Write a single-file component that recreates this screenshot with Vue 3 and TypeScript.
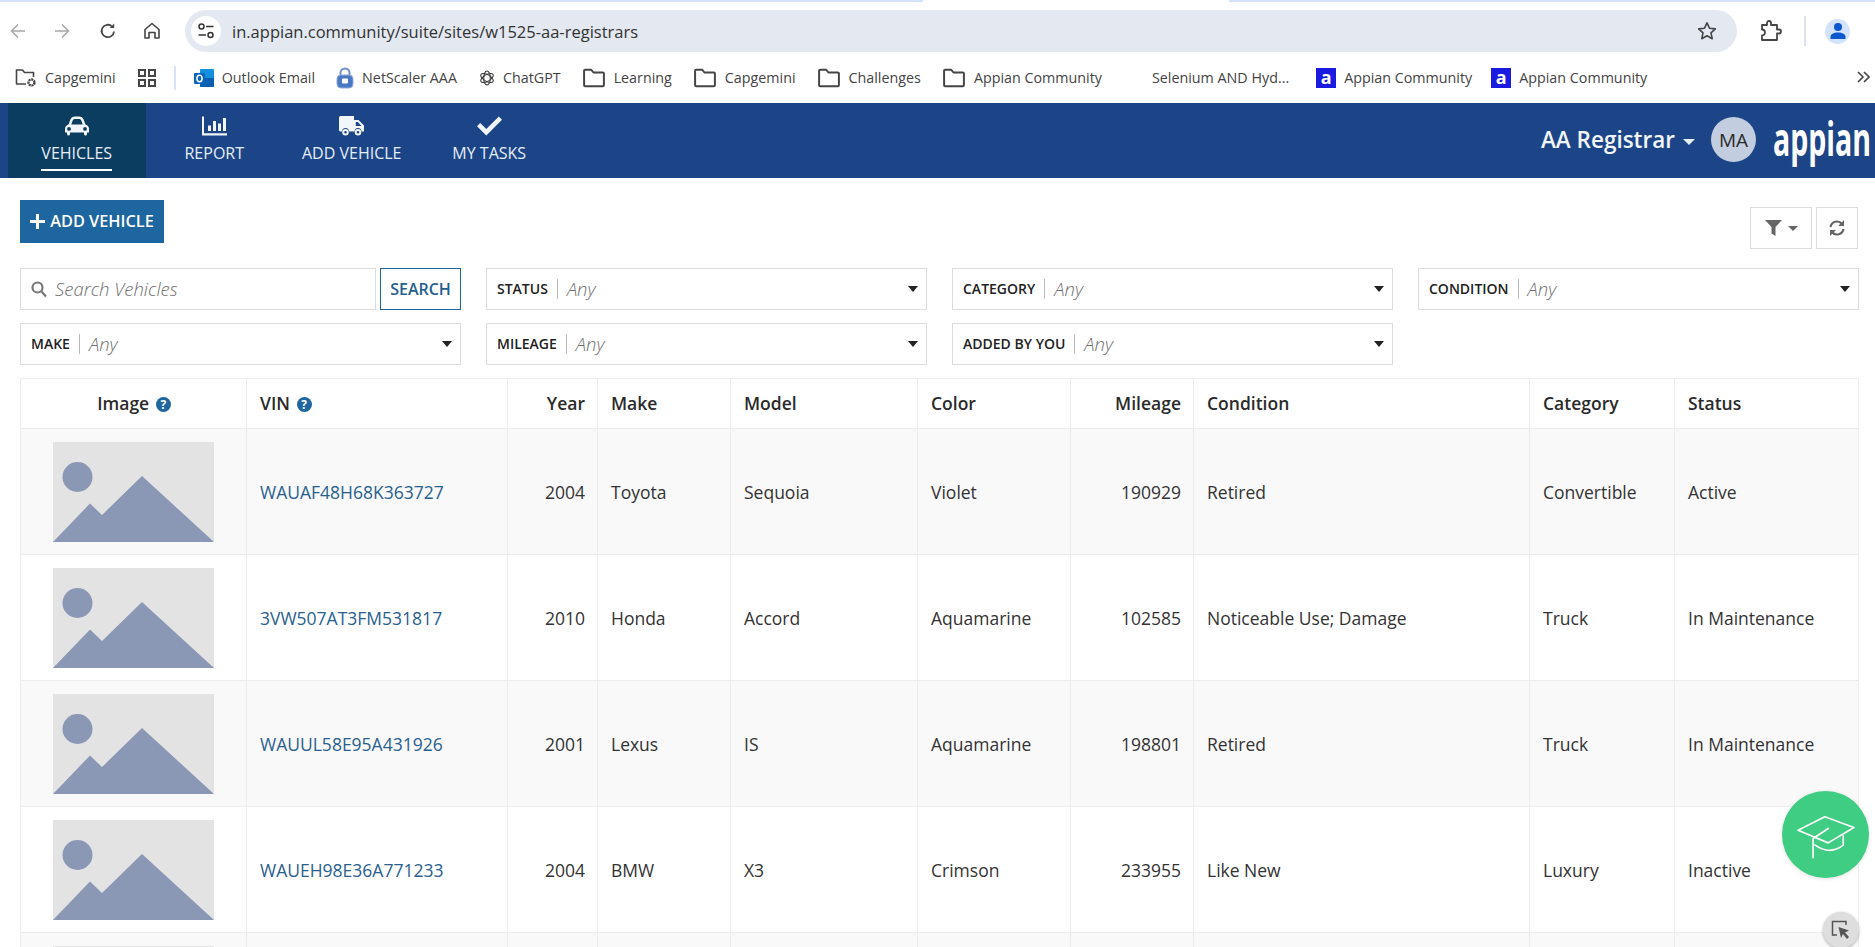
<script setup lang="ts">
interface Bookmark {
  label: string
  icon: 'capfolder' | 'outlook' | 'lock' | 'gpt' | 'folder' | 'blank' | 'appian'
}

interface Vehicle {
  vin: string
  year: number
  make: string
  model: string
  color: string
  mileage: number
  condition: string
  category: string
  status: string
}

const navItems = [
  { label: 'VEHICLES', icon: 'car', active: true },
  { label: 'REPORT', icon: 'chart', active: false },
  { label: 'ADD VEHICLE', icon: 'truck', active: false },
  { label: 'MY TASKS', icon: 'check', active: false },
]

const leftBookmarks: Bookmark[] = [{ label: 'Capgemini', icon: 'capfolder' }]

const bookmarks: Bookmark[] = [
  { label: 'Outlook Email', icon: 'outlook' },
  { label: 'NetScaler AAA', icon: 'lock' },
  { label: 'ChatGPT', icon: 'gpt' },
  { label: 'Learning', icon: 'folder' },
  { label: 'Capgemini', icon: 'folder' },
  { label: 'Challenges', icon: 'folder' },
  { label: 'Appian Community', icon: 'folder' },
  { label: 'Selenium AND Hyd...', icon: 'blank' },
  { label: 'Appian Community', icon: 'appian' },
  { label: 'Appian Community', icon: 'appian' },
]

const filters = ['STATUS', 'CATEGORY', 'CONDITION', 'MAKE', 'MILEAGE', 'ADDED BY YOU']

const vehicles: Vehicle[] = [
  { vin: 'WAUAF48H68K363727', year: 2004, make: 'Toyota', model: 'Sequoia', color: 'Violet', mileage: 190929, condition: 'Retired', category: 'Convertible', status: 'Active' },
  { vin: '3VW507AT3FM531817', year: 2010, make: 'Honda', model: 'Accord', color: 'Aquamarine', mileage: 102585, condition: 'Noticeable Use; Damage', category: 'Truck', status: 'In Maintenance' },
  { vin: 'WAUUL58E95A431926', year: 2001, make: 'Lexus', model: 'IS', color: 'Aquamarine', mileage: 198801, condition: 'Retired', category: 'Truck', status: 'In Maintenance' },
  { vin: 'WAUEH98E36A771233', year: 2004, make: 'BMW', model: 'X3', color: 'Crimson', mileage: 233955, condition: 'Like New', category: 'Luxury', status: 'Inactive' },
]
</script>

<template>
  <div class="page">
    <div class="tab-strip">
      <span class="strip-left"></span>
      <span class="strip-right"></span>
    </div>

    <div class="toolbar">
      <svg class="tb-icon back" viewBox="0 0 18 18" fill="none" stroke="#a8a8a8" stroke-width="1.6"><path d="M16 9H2.5M9 2.5 2.5 9 9 15.500" /></svg>
      <svg class="tb-icon forward" viewBox="0 0 18 18" fill="none" stroke="#a8a8a8" stroke-width="1.6"><path d="M2 9h13.500M9 2.500 15.500 9 9 15.500" /></svg>
      <svg class="tb-icon reload" viewBox="0 0 18 18" fill="none" stroke="#454545" stroke-width="1.800"><path d="M15 9.500A6.200 6.200 0 1 1 13 4.400" /><path d="M15.200 1.500v4.500h-4.500" fill="#454545" stroke="none" /></svg>
      <svg class="tb-icon home" viewBox="0 0 18 18" fill="none" stroke="#454545" stroke-width="1.600"><path d="M2 16V7.500L9 1.500l7 6V16h-4v-5.500H6V16Z" stroke-linejoin="round" /></svg>
      <div class="address">
        <span class="site-info">
          <svg viewBox="0 0 18 18" width="18" height="18" fill="none" stroke="#333" stroke-width="1.500">
            <circle cx="4.500" cy="4.500" r="2.500" /><path d="M9 4.500h7.500M1.500 13H9" /><circle cx="13.500" cy="13" r="2.500" />
          </svg>
        </span>
        <span class="url">in.appian.community/suite/sites/w1525-aa-registrars</span>
        <svg class="star" viewBox="0 0 20 20" width="20" height="20" fill="none" stroke="#454545" stroke-width="1.600"><path d="m10 1.800 2.500 5.400 5.800.7-4.300 4 1.200 5.800-5.200-3-5.200 3 1.200-5.800-4.300-4 5.800-.7Z" stroke-linejoin="round" /></svg>
      </div>
      <svg class="ext" viewBox="0 0 22 22" width="22" height="22" fill="none" stroke="#454545" stroke-width="1.800"><path d="M2 5h5V3a2 2 0 0 1 4 0v2h6v4.500h2a2 2 0 0 1 0 4h-2V20H2v-4.500a3 3 0 0 0 0-6Z" stroke-linejoin="round" /></svg>
      <span class="tb-divider"></span>
      <span class="profile">
        <svg viewBox="0 0 18 18" width="18" height="18" fill="#0b57d0"><circle cx="9" cy="5" r="4" /><path d="M1.500 17v-2c0-3 3-4.500 7.500-4.500s7.500 1.500 7.500 4.500v2Z" /></svg>
      </span>
    </div>

    <div class="bookmarks">
      <span v-for="b in leftBookmarks" :key="b.label" class="bm">
        <svg width="22" height="20" viewBox="0 0 22 20" fill="none" stroke="#454545" stroke-width="1.600"><path d="M11 16H1.500V2h6l2 2.500h9V9" stroke-linejoin="round" /><circle cx="16.500" cy="14.500" r="3" stroke-width="2.400" stroke-dasharray="2 .7" /></svg>
        {{ b.label }}
      </span>
      <svg class="bm-grid" width="18" height="18" viewBox="0 0 18 18" fill="none" stroke="#454545" stroke-width="2"><rect x="1" y="1" width="6" height="6" /><rect x="11" y="1" width="6" height="6" /><rect x="1" y="11" width="6" height="6" /><rect x="11" y="11" width="6" height="6" /></svg>
      <span class="bm-divider"></span>
      <span v-for="(b, i) in bookmarks" :key="i" class="bm" :class="'bm-' + b.icon">
        <svg v-if="b.icon === 'outlook'" width="20" height="20" viewBox="0 0 20 20">
          <rect x="6" y="1" width="14" height="18" rx="1" fill="#1490df" />
          <path d="M6 10h14v8a1 1 0 0 1-1 1H7a1 1 0 0 1-1-1Z" fill="#0a5fb0" />
          <rect x="0" y="5" width="11" height="11" rx="1" fill="#0a64c0" />
          <ellipse cx="5.500" cy="10.500" rx="2.600" ry="3.200" fill="none" stroke="#fff" stroke-width="1.500" />
        </svg>
        <svg v-else-if="b.icon === 'lock'" width="18" height="22" viewBox="0 0 18 22">
          <path d="M4.500 9V6a4.500 4.500 0 0 1 9 0v3" fill="none" stroke="#6c8fc9" stroke-width="2" />
          <rect x="1" y="8" width="16" height="13" rx="4" fill="#4a78c4" stroke="#8fa9da" />
          <rect x="6" y="11.500" width="6" height="5" rx="1" fill="#fff" />
        </svg>
        <svg v-else-if="b.icon === 'gpt'" width="16" height="16" viewBox="0 0 16 16" fill="none" stroke="#3b3b3b" stroke-width="1.100">
          <ellipse cx="8" cy="8" rx="3.300" ry="7" />
          <ellipse cx="8" cy="8" rx="3.300" ry="7" transform="rotate(60 8 8)" />
          <ellipse cx="8" cy="8" rx="3.300" ry="7" transform="rotate(120 8 8)" />
        </svg>
        <svg v-else-if="b.icon === 'folder'" class="folder" width="20" height="18" viewBox="0 0 20 18" fill="none" stroke="#454545" stroke-width="1.800"><path d="M1 2.500a1 1 0 0 1 1-1h5.500l2 2.500H18a1 1 0 0 1 1 1V15.500a1 1 0 0 1-1 1H2a1 1 0 0 1-1-1Z" stroke-linejoin="round" /></svg>
        <span v-else-if="b.icon === 'appian'" class="a-icon">a</span>
        <span v-else class="blank-icon"></span>
        {{ b.label }}
      </span>
      <svg class="bm-more" width="13" height="12" viewBox="0 0 13 12" fill="none" stroke="#454545" stroke-width="1.600"><path d="m1 1 5 5-5 5M7 1l5 5-5 5" /></svg>
    </div>

    <header class="app-header">
      <nav class="nav">
        <a v-for="item in navItems" :key="item.label" class="nav-item" :class="{ active: item.active }">
          <svg v-if="item.icon === 'car'" width="24" height="19" viewBox="0 0 24 19" fill="#f2f5fa" fill-rule="evenodd"><path d="M3.500 8 5.500 2.800Q6.600 0 9.500 0h5q2.900 0 4 2.800L20.500 8Q24 9 24 12.500V16h-2v1.500a1.500 1.500 0 0 1-3 0V16H5v1.500a1.500 1.500 0 0 1-3 0V16H0v-3.500Q0 9 3.500 8ZM6.300 8h11.400l-1.400-4Q15.800 2.500 14.500 2.500h-5Q8.200 2.500 7.700 4ZM4 10.500a1.900 1.900 0 1 0 0 3.800 1.900 1.900 0 0 0 0-3.800Zm16 0a1.900 1.900 0 1 0 0 3.800 1.900 1.900 0 0 0 0-3.800Z" /></svg>
          <svg v-else-if="item.icon === 'chart'" width="25" height="19" viewBox="0 0 25 19" fill="#f2f5fa"><path d="M0 0h2v16.700h23V19H0Z" /><rect x="6" y="9" width="3" height="5.500" /><rect x="11" y="4.500" width="3" height="10" /><rect x="16" y="7" width="3" height="7.500" /><rect x="21" y="1.500" width="3" height="13" /></svg>
          <svg v-else-if="item.icon === 'truck'" width="25" height="20" viewBox="0 0 25 20" fill="#f2f5fa" fill-rule="evenodd"><path d="M1.500 0H15v4h4.500L25 9.500V15.500H22.500a3.500 3.500 0 0 0-7 0H10a3.500 3.500 0 0 0-7 0H1.500A1.500 1.500 0 0 1 0 14V1.500A1.500 1.500 0 0 1 1.500 0ZM16.800 6v4h5.700l-3.700-4Z" /><path d="M6.500 13a3.300 3.300 0 1 1 0 6.600 3.300 3.300 0 0 1 0-6.600Zm0 2a1.300 1.300 0 1 0 0 2.600 1.300 1.300 0 0 0 0-2.600ZM19 13a3.300 3.300 0 1 1 0 6.600 3.300 3.300 0 0 1 0-6.600Zm0 2a1.300 1.300 0 1 0 0 2.600 1.300 1.300 0 0 0 0-2.600Z" /></svg>
          <svg v-else width="25" height="19" viewBox="0 0 25 19" fill="#f2f5fa"><path d="M9.300 19 0 9.800l3.200-3.200 6.100 6L21.800 0 25 3.200Z" /></svg>
          <span class="nav-label">{{ item.label }}</span>
        </a>
      </nav>
      <div class="header-right">
        <span class="role">AA Registrar</span>
        <span class="role-caret"></span>
        <span class="avatar">MA</span>
        <span class="logo"><span>appian</span></span>
      </div>
    </header>

    <main class="content">
      <div class="actions">
        <button class="add-btn"><span class="plus"></span>ADD VEHICLE</button>
        <div class="action-icons">
          <button class="icon-btn filter-btn">
            <svg width="17" height="16" viewBox="0 0 17 16" fill="#666"><path d="M0 0h17l-6.500 7v9l-4-2.500V7Z" /></svg>
            <span class="mini-caret"></span>
          </button>
          <button class="icon-btn refresh-btn">
            <svg width="16" height="16" viewBox="0 0 16 16" fill="none" stroke="#666" stroke-width="2.200"><path d="M1.500 7a6.500 6.500 0 0 1 11.500-3M14.500 9a6.500 6.500 0 0 1-11.500 3" /><path d="M15 0v6h-6ZM1 16v-6h6Z" fill="#666" stroke="none" /></svg>
          </button>
        </div>
      </div>

      <div class="filters">
        <div class="search">
          <div class="search-input">
            <svg width="16" height="17" viewBox="0 0 16 17" fill="none" stroke="#777" stroke-width="2.200"><circle cx="6.500" cy="6.500" r="5" /><path d="m10.500 10.500 4.500 5" /></svg>
            <span class="placeholder">Search Vehicles</span>
          </div>
          <button class="search-btn">SEARCH</button>
        </div>
        <div v-for="f in filters" :key="f" class="select">
          <span class="select-label">{{ f }}</span>
          <span class="select-sep"></span>
          <span class="placeholder">Any</span>
          <span class="select-caret"></span>
        </div>
      </div>

      <table class="grid">
        <colgroup>
          <col class="col-image" /><col class="col-vin" /><col class="col-year" /><col class="col-make" /><col class="col-model" /><col class="col-color" /><col class="col-mileage" /><col class="col-condition" /><col class="col-category" /><col />
        </colgroup>
        <thead>
          <tr>
            <th class="center">Image <span class="help">?</span></th>
            <th>VIN <span class="help">?</span></th>
            <th class="right">Year</th>
            <th>Make</th>
            <th>Model</th>
            <th>Color</th>
            <th class="right">Mileage</th>
            <th>Condition</th>
            <th>Category</th>
            <th>Status</th>
          </tr>
        </thead>
        <tbody>
          <tr v-for="v in vehicles" :key="v.vin">
            <td class="center image-cell">
              <svg class="thumb" width="161" height="100" viewBox="0 0 161 100">
                <rect width="161" height="100" fill="#e3e3e3" />
                <circle cx="24.500" cy="35" r="15" fill="#8b98b5" />
                <path d="M0 100 37 61.500 49 73 89 34 161 100Z" fill="#8b98b5" />
              </svg>
            </td>
            <td><a class="vin">{{ v.vin }}</a></td>
            <td class="right">{{ v.year }}</td>
            <td>{{ v.make }}</td>
            <td>{{ v.model }}</td>
            <td>{{ v.color }}</td>
            <td class="right">{{ v.mileage }}</td>
            <td>{{ v.condition }}</td>
            <td>{{ v.category }}</td>
            <td>{{ v.status }}</td>
          </tr>
          <tr>
            <td class="center image-cell">
              <svg class="thumb" width="161" height="100" viewBox="0 0 161 100"><rect width="161" height="100" fill="#e3e3e3" /></svg>
            </td>
            <td></td><td></td><td></td><td></td><td></td><td></td><td></td><td></td><td></td>
          </tr>
        </tbody>
      </table>
    </main>

    <div class="fab">
      <svg width="87" height="87" viewBox="247 63 260 260" fill="none" stroke="#fff" stroke-width="5" stroke-linejoin="round" stroke-linecap="round">
        <path d="M295 180 375 140 462 172 385 218Z" />
        <path d="M385 175 340 205V262" />
        <path d="M345 224Q390 256 430 225V197" />
      </svg>
    </div>
    <div class="cursor-btn">
      <svg width="20" height="20" viewBox="0 0 20 20" fill="none" stroke="#555" stroke-width="1.500">
        <path d="M6 15H1.500V1.500H15V5" />
        <path d="M7.500 7 18 10.500 14 12.500 18 17 16 19 12 14 10 18Z" fill="#555" stroke="none" />
      </svg>
    </div>
  </div>
</template>

<style>
html,
body {
  margin: 0;
  height: 947px;
  overflow: hidden;
  background: #fff;
}
</style>

<style scoped>
.page {
  position: relative;
  height: 947px;
  overflow: hidden;
  font-family: "Open Sans", "Noto Sans", sans-serif;
  color: #222;
}

.tab-strip {
  height: 2px;
  display: flex;
  justify-content: space-between;
}

.strip-left {
  width: 923px;
  background: #d3e3fd;
}

.strip-right {
  width: 646px;
  background: #d3e3fd;
}

.toolbar {
  height: 42px;
  padding-top: 8px;
  display: flex;
  align-items: center;
  position: relative;
}

.tb-icon {
  width: 18px;
  height: 18px;
  flex: none;
}

.back {
  margin-left: 9px;
}

.forward {
  margin-left: 26px;
}

.reload {
  margin-left: 28px;
}

.home {
  margin-left: 26px;
}

.address {
  margin-left: 24px;
  width: 1552px;
  height: 42px;
  border-radius: 21px;
  background: #e3e8f1;
  display: flex;
  align-items: center;
  box-sizing: border-box;
  padding: 0 20px 0 6px;
}

.site-info {
  width: 30px;
  height: 30px;
  border-radius: 50%;
  background: #fff;
  display: flex;
  align-items: center;
  justify-content: center;
}

.url {
  margin-left: 11px;
  font-size: 16.500px;
  color: #333;
  flex: 1;
}

.ext {
  margin-left: 23px;
}

.tb-divider {
  margin-left: 22px;
  width: 2px;
  height: 30px;
  background: #d8e4f4;
}

.profile {
  margin-left: 19px;
  width: 25px;
  height: 25px;
  border-radius: 50%;
  background: #d3e3fd;
  display: flex;
  align-items: center;
  justify-content: center;
}

.bookmarks {
  height: 51px;
  display: flex;
  align-items: center;
  gap: 22px;
  padding-left: 15px;
}

.bm {
  display: inline-flex;
  align-items: center;
  gap: 8px;
  font-size: 14.300px;
  color: #444;
  white-space: nowrap;
}

.bm .folder {
  width: 22px;
  height: 20px;
  margin-right: 1px;
}

.bm-lock {
  margin-left: -1px;
}

.bm-blank {
  margin-right: 5px;
}

.bm-appian + .bm-appian {
  margin-left: -3px;
}

.bm-divider {
  width: 2px;
  height: 24px;
  background: #d8e4f4;
  margin: 0 -4px;
}

.bm-more {
  position: absolute;
  right: 5px;
  top: 71px;
}

.a-icon {
  width: 20px;
  height: 20px;
  background: #1a1ae0;
  color: #fff;
  font-size: 18px;
  font-weight: 700;
  line-height: 19px;
  text-align: center;
  display: block;
}

.blank-icon {
  width: 20px;
  height: 20px;
}

.app-header {
  height: 75px;
  background: #1c4587;
  display: flex;
  justify-content: space-between;
  padding-left: 8px;
}

.nav {
  display: flex;
}

.nav-item {
  width: 137.500px;
  display: flex;
  flex-direction: column;
  align-items: center;
  padding-top: 13px;
  box-sizing: border-box;
  color: #e6eefa;
}

.nav-item svg {
  height: 20px;
}

.nav-item.active {
  background: #0a3d5f;
}

.nav-label {
  font-size: 16px;
  line-height: 22px;
  margin-top: 6px;
  padding-bottom: 5px;
  border-bottom: 2px solid transparent;
  white-space: nowrap;
}

.active .nav-label {
  border-bottom-color: #fff;
}

.header-right {
  display: flex;
  align-items: center;
  color: #f2f5fa;
  padding-bottom: 2px;
}

.role {
  font-size: 22.500px;
  font-weight: 600;
}

.role-caret {
  margin-left: 8px;
  margin-top: 4px;
  border-left: 6px solid transparent;
  border-right: 6px solid transparent;
  border-top: 6px solid #e6eefa;
}

.avatar {
  margin-left: 16px;
  width: 45px;
  height: 45px;
  border-radius: 50%;
  background: #c2cde0;
  color: #2b2b2b;
  font-size: 19px;
  display: flex;
  align-items: center;
  justify-content: center;
}

.logo {
  margin-left: 17px;
  width: 102px;
  height: 73px;
  overflow: visible;
  display: block;
}

.logo span {
  display: block;
  font-size: 46px;
  font-weight: 700;
  line-height: 70px;
  color: #fff;
  transform: scaleX(0.62);
  transform-origin: left center;
  white-space: nowrap;
}

.content {
  padding: 0 16px 0 20px;
}

.actions {
  height: 90px;
  display: flex;
  justify-content: space-between;
  align-items: flex-start;
}

button {
  font-family: inherit;
  cursor: pointer;
}

.add-btn {
  margin-top: 22px;
  width: 144px;
  height: 43px;
  background: #1d669f;
  border: 0;
  color: #fff;
  font-size: 16.300px;
  font-weight: 600;
  padding: 0 0 1px;
  display: flex;
  align-items: center;
  justify-content: center;
  gap: 5px;
}

.plus {
  width: 15px;
  height: 15px;
  background:
    linear-gradient(#fff, #fff) center / 15px 3px no-repeat,
    linear-gradient(#fff, #fff) center / 3px 15px no-repeat;
}

.action-icons {
  margin-top: 29px;
  margin-right: 1px;
  display: flex;
  gap: 4px;
}

.icon-btn {
  height: 42px;
  background: #fff;
  border: 1px solid #dcdcdc;
  display: flex;
  align-items: center;
  justify-content: center;
  padding: 0;
}

.filter-btn {
  width: 62px;
  gap: 6px;
}

.refresh-btn {
  width: 42px;
}

.mini-caret {
  border-left: 5px solid transparent;
  border-right: 5px solid transparent;
  border-top: 5px solid #666;
}

.filters {
  display: grid;
  grid-template-columns: repeat(4, 1fr);
  gap: 13px 25px;
}

.search {
  display: flex;
  gap: 4px;
}

.search-input {
  flex: 1;
  height: 42px;
  box-sizing: border-box;
  border: 1px solid #dcdcdc;
  display: flex;
  align-items: center;
  gap: 8px;
  padding-left: 10px;
}

.search-btn {
  width: 81px;
  height: 42px;
  background: #fff;
  border: 1px solid #1d669f;
  color: #24608f;
  font-size: 16px;
  font-weight: 600;
  padding: 0;
}

.placeholder {
  font-size: 18.500px;
  font-style: italic;
  font-weight: 300;
  color: #6f6f6f;
  margin-top: -2px;
}

.select {
  height: 42px;
  box-sizing: border-box;
  border: 1px solid #dcdcdc;
  display: flex;
  align-items: center;
  padding: 0 8px 0 10px;
}

.select:nth-child(5) {
  grid-column: 1;
}

.select-label {
  font-size: 14px;
  font-weight: 600;
  color: #222;
  margin-top: -2px;
}

.select-sep {
  width: 1px;
  height: 20px;
  background: #bbb;
  margin: 0 9px;
}

.select-caret {
  margin-left: auto;
  border-left: 5.500px solid transparent;
  border-right: 5.500px solid transparent;
  border-top: 6px solid #222;
}

.grid {
  margin-top: 13px;
  width: 100%;
  table-layout: fixed;
  border-collapse: collapse;
  font-size: 17.500px;
  border: 1px solid #ececec;
}

.col-image { width: 226px; }
.col-vin { width: 261px; }
.col-year { width: 90px; }
.col-make { width: 133px; }
.col-model { width: 187px; }
.col-color { width: 153px; }
.col-mileage { width: 123px; }
.col-condition { width: 336px; }
.col-category { width: 145px; }

th,
td {
  border: 1px solid #ececec;
  padding: 0 12px 0 13px;
  text-align: left;
  white-space: nowrap;
}

th {
  height: 47px;
  font-weight: 600;
  padding-bottom: 2px;
  color: #2b2b2b;
}

td {
  height: 125px;
  color: #333;
}

.grid th.center,
.grid td.center {
  text-align: center;
}

.grid th.right,
.grid td.right {
  text-align: right;
}

tbody tr:nth-child(odd) {
  background: #f9f9f9;
}

.grid .image-cell {
  padding: 0;
}

.thumb {
  display: block;
  margin: 0 auto;
}

.vin {
  color: #2a6090;
}

.help {
  display: inline-block;
  width: 15px;
  height: 15px;
  line-height: 15px;
  border-radius: 50%;
  background: #1d669f;
  color: #fff;
  font-size: 12px;
  font-weight: 700;
  text-align: center;
  vertical-align: 1px;
  margin-left: 2px;
}

.fab {
  position: absolute;
  left: 1782px;
  top: 791px;
  width: 87px;
  height: 87px;
  border-radius: 50%;
  background: #3ecd82;
  box-shadow: 0 1px 4px rgba(0, 0, 0, 0.12);
}

.fab svg,
.cursor-btn svg {
  display: block;
}

.cursor-btn {
  position: absolute;
  left: 1823px;
  top: 912px;
  width: 36px;
  height: 36px;
  border-radius: 50%;
  background: #dedede;
  box-shadow: 0 1px 3px rgba(0, 0, 0, 0.3);
  display: flex;
  align-items: center;
  justify-content: center;
}
</style>
